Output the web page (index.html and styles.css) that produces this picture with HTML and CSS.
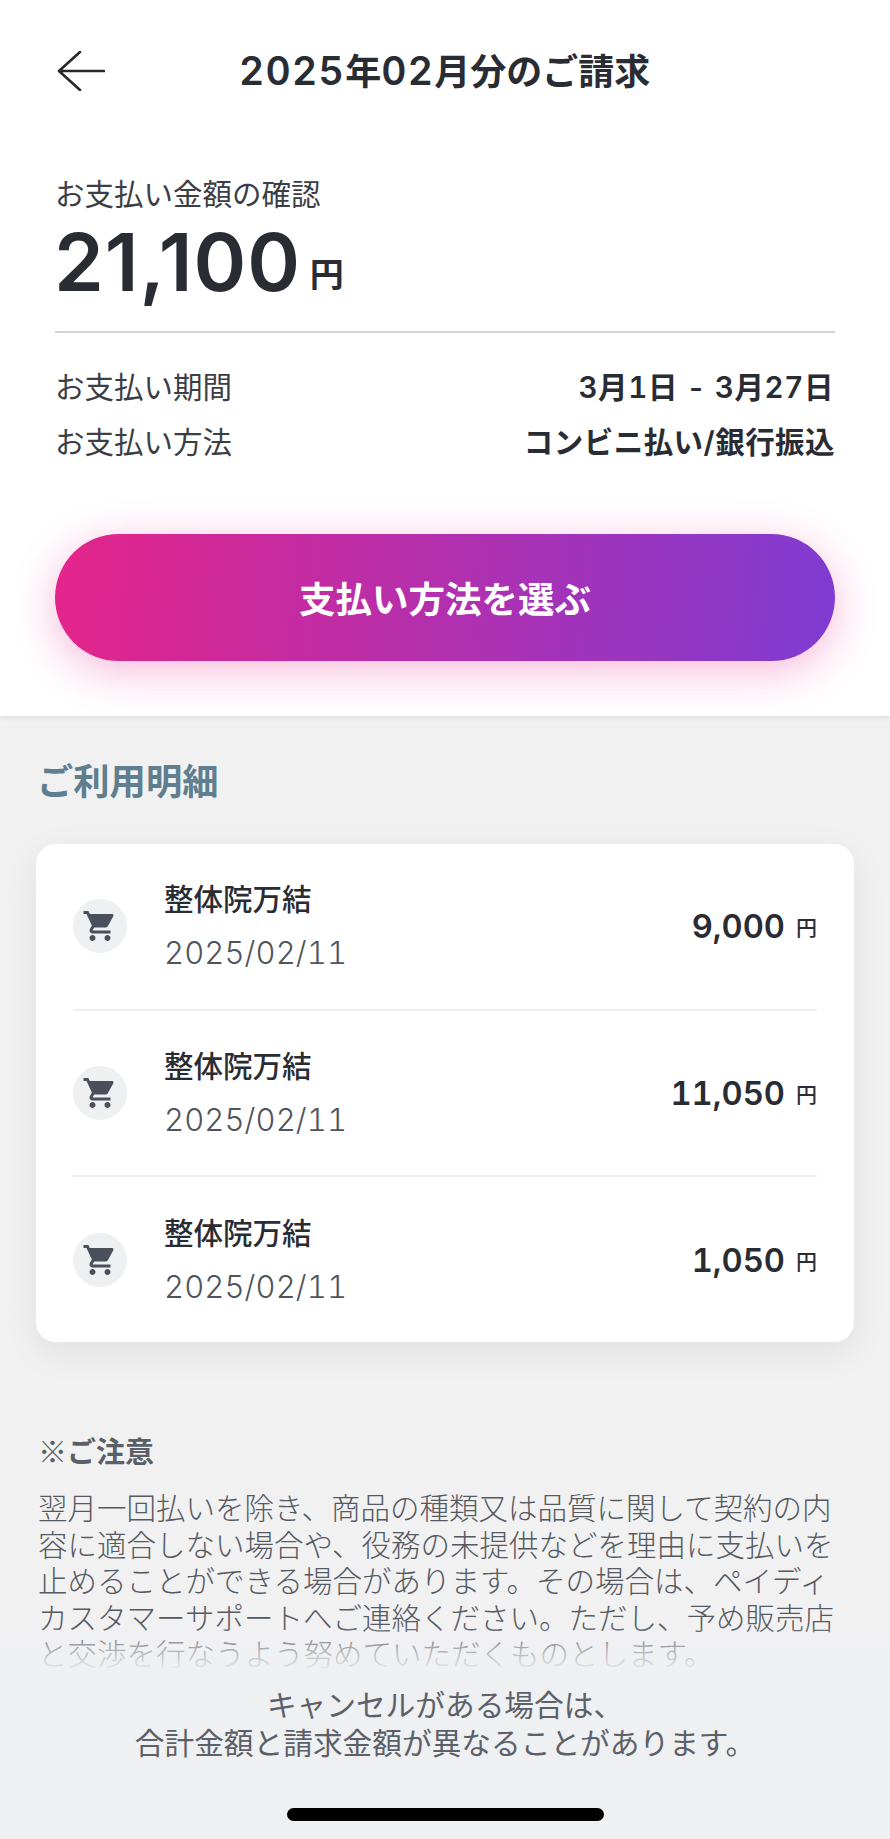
FILE: index.html
```html
<!DOCTYPE html>
<html lang="ja">
<head>
<meta charset="utf-8">
<title>2025年02月分のご請求</title>
<link rel="stylesheet" href="styles.css">
</head>
<body>
<div class="screen">
  <section class="summary">
    <header class="topbar">
      <svg class="back" viewBox="0 0 48 40" width="48" height="40" aria-hidden="true"><path d="M23 1 L2 20 L23 39 M2 20 H47" fill="none" stroke="#26282e" stroke-width="2.6" stroke-linecap="round" stroke-linejoin="round"/></svg>
      <h1 class="title"><span class="num">2025</span>年<span class="num">02</span>月分のご請求</h1>
    </header>
    <p class="label">お支払い金額の確認</p>
    <p class="total"><span class="total-num">21,100</span><span class="total-yen">円</span></p>
    <hr class="rule">
    <div class="meta">
      <div class="meta-row"><span>お支払い期間</span><strong class="period">3月1日 - 3月27日</strong></div>
      <div class="meta-row"><span>お支払い方法</span><strong class="method">コンビニ払い/銀行振込</strong></div>
    </div>
    <button class="pay" type="button">支払い方法を選ぶ</button>
  </section>

  <main class="details">
    <h2 class="details-title">ご利用明細</h2>
    <div class="card">
      <div class="item">
        <span class="cart"><svg viewBox="0 0 24 24" width="36" height="36" aria-hidden="true"><path d="M7 18c-1.1 0-1.99.9-1.99 2S5.9 22 7 22s2-.9 2-2-.9-2-2-2zM1 2v2h2l3.6 7.59-1.35 2.45c-.16.28-.25.61-.25.96 0 1.1.9 2 2 2h12v-2H7.42c-.14 0-.25-.11-.25-.25l.03-.12.9-1.63h7.45c.75 0 1.41-.41 1.75-1.03l3.58-6.49c.08-.14.12-.31.12-.48 0-.55-.45-1-1-1H5.21l-.94-2H1zm16 16c-1.1 0-1.99.9-1.99 2s.89 2 1.99 2 2-.9 2-2-.9-2-2-2z"/></svg></span>
        <div class="item-text"><div class="item-name">整体院万結</div><div class="item-date">2025/02/11</div></div>
        <div class="item-price">9,000<span class="yen">円</span></div>
      </div>
      <div class="item">
        <span class="cart"><svg viewBox="0 0 24 24" width="36" height="36" aria-hidden="true"><path d="M7 18c-1.1 0-1.99.9-1.99 2S5.9 22 7 22s2-.9 2-2-.9-2-2-2zM1 2v2h2l3.6 7.59-1.35 2.45c-.16.28-.25.61-.25.96 0 1.1.9 2 2 2h12v-2H7.42c-.14 0-.25-.11-.25-.25l.03-.12.9-1.63h7.45c.75 0 1.41-.41 1.75-1.03l3.58-6.49c.08-.14.12-.31.12-.48 0-.55-.45-1-1-1H5.21l-.94-2H1zm16 16c-1.1 0-1.99.9-1.99 2s.89 2 1.99 2 2-.9 2-2-.9-2-2-2z"/></svg></span>
        <div class="item-text"><div class="item-name">整体院万結</div><div class="item-date">2025/02/11</div></div>
        <div class="item-price">11,050<span class="yen">円</span></div>
      </div>
      <div class="item">
        <span class="cart"><svg viewBox="0 0 24 24" width="36" height="36" aria-hidden="true"><path d="M7 18c-1.1 0-1.99.9-1.99 2S5.9 22 7 22s2-.9 2-2-.9-2-2-2zM1 2v2h2l3.6 7.59-1.35 2.45c-.16.28-.25.61-.25.96 0 1.1.9 2 2 2h12v-2H7.42c-.14 0-.25-.11-.25-.25l.03-.12.9-1.63h7.45c.75 0 1.41-.41 1.75-1.03l3.58-6.49c.08-.14.12-.31.12-.48 0-.55-.45-1-1-1H5.21l-.94-2H1zm16 16c-1.1 0-1.99.9-1.99 2s.89 2 1.99 2 2-.9 2-2-.9-2-2-2z"/></svg></span>
        <div class="item-text"><div class="item-name">整体院万結</div><div class="item-date">2025/02/11</div></div>
        <div class="item-price">1,050<span class="yen">円</span></div>
      </div>
    </div>
    <h3 class="notice-title"><span class="kome">※</span>ご注意</h3>
    <p class="notice">翌月一回払いを除き、商品の種類又は品質に関して契約の内容に適合しない場合や、役務の未提供などを理由に支払いを止めることができる場合があります。その場合は、ペイディカスタマーサポートへご連絡ください。ただし、予め販売店と交渉を行なうよう努めていただくものとします。</p>
  </main>

  <footer class="footer">
    <p class="footer-text">キャンセルがある場合は、<br>合計金額と請求金額が異なることがあります。</p>
    <div class="home-bar"></div>
  </footer>
</div>
</body>
</html>
```
FILE: styles.css
```css
* { box-sizing: border-box; }
html, body { margin: 0; padding: 0; }
body {
  font-family: "Inter", "Noto Sans CJK JP", sans-serif;
  font-variant-numeric: tabular-nums;
  color: #2a2c33;
  background: #f1f1f2;
}
.screen {
  position: relative;
  width: 890px;
  height: 1839px;
  overflow: hidden;
  background: #f1f1f2;
}
.summary {
  position: relative;
  z-index: 1;
  height: 716px;
  padding: 51px 55px 0;
  background: #fff;
  box-shadow: 0 1px 6px rgba(0, 0, 0, 0.1);
}
.topbar {
  display: flex;
  align-items: center;
  height: 40px;
  padding-left: 2px;
}
.back { flex: none; }
.title {
  margin: 0 0 0 134px;
  font-size: 36px;
  font-weight: 600;
  line-height: 40px;
  white-space: nowrap;
}
.num {
  font-size: 39px;
  letter-spacing: 1.3px;
}
.label {
  margin: 0 0 2px;
  padding-top: 83px;
  font-size: 29.5px;
  line-height: 40px;
  font-weight: 400;
  color: #3c3e45;
}
.total {
  margin: 0;
  height: 92px;
  line-height: 92px;
  white-space: nowrap;
}
.total-num {
  margin-left: -1px;
  font-size: 80px;
  font-weight: 600;
  font-variant-numeric: normal;
  letter-spacing: 0.9px;
}
.total-yen {
  margin-left: 9px;
  font-size: 34px;
  font-weight: 600;
  vertical-align: 4px;
}
.rule {
  margin: 23px 0 0;
  height: 2px;
  border: 0;
  background: #d0d2dc;
}
.meta {
  display: flex;
  flex-direction: column;
  gap: 15px;
  padding-top: 34px;
}
.meta-row {
  display: flex;
  justify-content: space-between;
  font-size: 29.5px;
  line-height: 40px;
  font-weight: 400;
  color: #3c3e45;
}
.meta-row strong {
  font-size: 29.5px;
  font-weight: 600;
  color: #2a2c33;
}
.period { letter-spacing: 0.6px; margin-right: 1px; }
.method { letter-spacing: 0.45px; }
.pay {
  display: block;
  width: 780px;
  height: 127px;
  margin-top: 72px;
  border: 0;
  border-radius: 64px;
  font-family: inherit;
  font-size: 36.5px;
  font-weight: 600;
  color: #fff;
  background: linear-gradient(95deg, #e5248a 0%, #7f3bd2 100%);
  box-shadow: 0 10px 44px rgba(229, 36, 138, 0.32);
}
.details {
  padding: 0 36px;
}
.details-title {
  margin: 44px 0 0 1px;
  font-size: 36.3px;
  line-height: 44px;
  font-weight: 600;
  color: #5f7f8f;
}
.card {
  margin-top: 40px;
  height: 498px;
  padding: 0 37px;
  border-radius: 20px;
  background: #fff;
  box-shadow: 0 10px 36px rgba(0, 0, 0, 0.07);
}
.item {
  display: flex;
  align-items: center;
  height: 166.5px;
  border-bottom: 2px solid #eeeff0;
}
.item:last-child { border-bottom: 0; }
.cart {
  flex: none;
  display: flex;
  align-items: center;
  justify-content: center;
  width: 54px;
  height: 54px;
  border-radius: 50%;
  background: #eff0f2;
}
.cart svg { fill: #4a4f5b; }
.item-text {
  flex: 1;
  margin-left: 37px;
}
.item-name {
  font-size: 29.5px;
  line-height: 40px;
  font-weight: 500;
  margin-bottom: 14px;
}
.item-date {
  font-size: 31px;
  line-height: 40px;
  font-weight: 300;
  letter-spacing: 0.1px;
  color: #50545c;
}
.item-price {
  font-size: 32.7px;
  font-weight: 600;
  white-space: nowrap;
}
.yen {
  margin-left: 11px;
  font-size: 21px;
  font-weight: 500;
  vertical-align: 3px;
}
.notice-title {
  margin: 89px 0 0 2px;
  font-size: 29px;
  line-height: 38px;
  font-weight: 600;
  color: #5a6068;
}
.kome {
  font-family: "Noto Sans CJK JP", sans-serif;
  font-weight: 400;
}
.notice {
  margin: 18px 0 0 2px;
  width: 800px;
  font-size: 29.5px;
  line-height: 36.6px;
  font-weight: 300;
  color: #555a62;
}
.footer {
  position: absolute;
  z-index: 2;
  left: 0;
  right: 0;
  bottom: 0;
  height: 214px;
  padding-top: 61px;
  background: linear-gradient(to bottom, rgba(239, 240, 242, 0) 0, rgba(239, 240, 242, 0.55) 24px, #eff0f2 47px);
  text-align: center;
}
.footer-text {
  margin: 0;
  font-size: 29.7px;
  line-height: 38px;
  font-weight: 400;
  color: #5c6068;
}
.home-bar {
  width: 317px;
  height: 13px;
  margin: 46px auto 0;
  border-radius: 7px;
  background: #000;
}
```
